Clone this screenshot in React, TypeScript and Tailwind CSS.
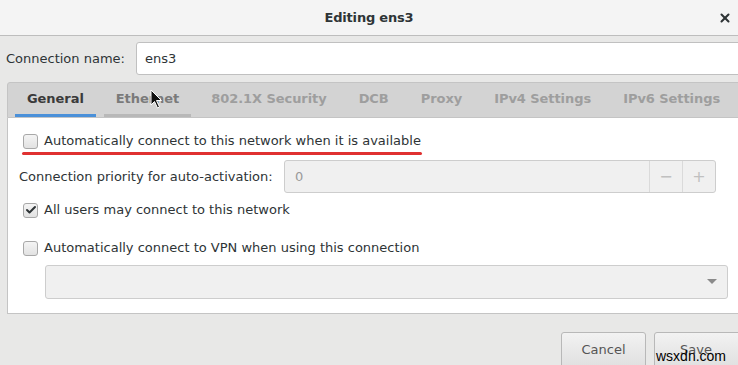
import { Check, X } from 'lucide-react'

const tabs = [
  { label: 'General', state: 'active' },
  { label: 'Ethernet', state: 'hover' },
  { label: '802.1X Security', state: 'off' },
  { label: 'DCB', state: 'off' },
  { label: 'Proxy', state: 'off' },
  { label: 'IPv4 Settings', state: 'off' },
  { label: 'IPv6 Settings', state: 'off' },
]

function CheckBox({ checked = false }: { checked?: boolean }) {
  return (
    <span className="w-[15px] h-[15px] shrink-0 rounded-[3px] border border-[#a8a8a8] bg-gradient-to-b from-[#f4f4f4] to-[#e2e2e2] flex items-center justify-center">
      {checked && <Check className="w-[12px] h-[12px] text-[#2e3436]" strokeWidth={4} />}
    </span>
  )
}

function Cursor() {
  return (
    <svg className="absolute left-[150px] top-[89px]" width="13" height="20" viewBox="0 0 13 20">
      <path d="M1 1 L1 16 L4.5 12.5 L7.5 19 L9.5 18 L6.5 11.5 L11.5 11.5 Z" fill="#111" stroke="#fff" strokeWidth="1" />
    </svg>
  )
}

export default function App() {
  return (
    <div
      className="relative w-[738px] h-[365px] overflow-hidden bg-[#e8e8e7] text-[13px] text-[#2e3436]"
      style={{ fontFamily: '"DejaVu Sans", sans-serif' }}
    >
      {/* Title bar */}
      <div className="relative h-[36px] bg-[#f4f4f4] border-b border-[#bdbdbd] flex items-center justify-center">
        <span className="font-bold text-[#2e3436] tracking-[-0.2px]">Editing ens3</span>
        <X className="absolute right-[6px] top-[11px] w-[14px] h-[14px] text-[#2e3436]" strokeWidth={3.5} />
      </div>

      {/* Connection name */}
      <div className="flex items-center mt-[6px] pl-[6px] h-[33px]">
        <span className="w-[130px] shrink-0">Connection name:</span>
        <div className="w-[620px] shrink-0 h-[33px] bg-white border border-[#c0c0c0] rounded-[3px] flex items-center px-[8px]">
          ens3
        </div>
      </div>

      {/* Notebook */}
      <div className="ml-[7px] mt-[7px] w-[750px]">
        <div className="h-[36px] bg-[#d3d3d3] border border-[#c4c4c4] rounded-t-[3px] flex items-stretch gap-2 pl-[7px]">
          {tabs.map((t) => (
            <div
              key={t.label}
              className={`px-3 flex items-center font-bold tracking-[-0.06px] border-b-[3px] ${
                t.state === 'active'
                  ? 'text-[#3a3a3a] border-[#4a90d9]'
                  : t.state === 'hover'
                  ? 'text-[#7a7a7a] border-[#b8b8b8]'
                  : 'text-[#9e9e9e] border-transparent'
              }`}
            >
              {t.label}
            </div>
          ))}
        </div>

        <div className="h-[196px] bg-white border border-t-0 border-[#c4c4c4] pl-[15px] pt-[15px]">
          <div className="relative flex items-center gap-[6px] h-[16px]">
            <CheckBox />
            <span>Automatically connect to this network when it is available</span>
            <span className="absolute left-[-1px] top-[19px] w-[400px] h-[3px] rounded-full bg-[#e03131]" />
          </div>

          <div className="flex items-center mt-[11px] h-[33px] -ml-[4px]">
            <span className="w-[265px]">Connection priority for auto-activation:</span>
            <div className="w-[432px] h-[33px] bg-[#f0f0f0] border border-[#cdcdcd] rounded-[3px] flex items-stretch">
              <span className="flex-1 flex items-center pl-[10px] text-[#9a9a9a]">0</span>
              <span className="w-[33px] border-l border-[#dadada] flex items-center justify-center text-[#c0c0c0] text-[16px]">−</span>
              <span className="w-[33px] border-l border-[#dadada] flex items-center justify-center text-[#c0c0c0] text-[16px]">+</span>
            </div>
          </div>

          <div className="flex items-center gap-[6px] h-[16px] mt-[9px]">
            <CheckBox checked />
            <span>All users may connect to this network</span>
          </div>

          <div className="flex items-center gap-[6px] h-[16px] mt-[22px]">
            <CheckBox />
            <span>Automatically connect to VPN when using this connection</span>
          </div>

          <div className="ml-[22px] mt-[9px] w-[683px] h-[34px] bg-[#f0f0f0] border border-[#cdcdcd] rounded-[3px] flex items-center justify-end pr-[10px]">
            <svg width="10" height="6" viewBox="0 0 10 6">
              <path d="M0 0 L10 0 L5 5 Z" fill="#8a8a8a" />
            </svg>
          </div>
        </div>
      </div>

      {/* Buttons */}
      <div className="flex justify-end gap-[8px] mt-[18px] -mr-[6px]">
        <div className="w-[85px] h-[36px] rounded-[3px] border border-[#b8b8b8] bg-gradient-to-b from-[#f2f2f2] to-[#e0e0e0] flex items-center justify-center text-[#555]">
          Cancel
        </div>
        <div className="w-[90px] h-[36px] rounded-[3px] border border-[#b8b8b8] bg-gradient-to-b from-[#f2f2f2] to-[#e0e0e0] flex items-center justify-center text-[#555] pr-[6px]">
          Save
        </div>
      </div>

      <span className="absolute left-[656px] top-[349px] text-[14px] text-black leading-none" style={{ fontFamily: '"Liberation Sans", sans-serif' }}>
        wsxdn.com
      </span>

      <Cursor />
    </div>
  )
}
